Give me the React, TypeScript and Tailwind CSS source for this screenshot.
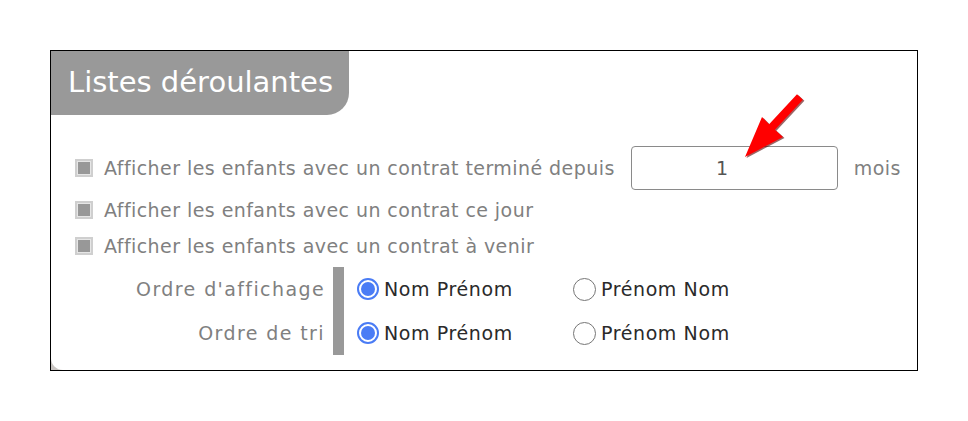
import React from "react";

const font = { fontFamily: '"DejaVu Sans", "Lato", sans-serif' };

function Check() {
  return (
    <span className="w-[18px] h-[18px] bg-[#cfcfcf] p-[2px] flex shrink-0">
      <span className="flex-1 bg-[#e6e6e6] p-[1px] flex">
        <span className="flex-1 bg-[#989898]" />
      </span>
    </span>
  );
}

function Radio({ on }: { on: boolean }) {
  return on ? (
    <span className="w-[22px] h-[22px] rounded-full border-2 border-[#4a7cf5] bg-white flex items-center justify-center shrink-0">
      <span className="w-[14px] h-[14px] rounded-full bg-[#4a7cf5]" />
    </span>
  ) : (
    <span className="w-[23px] h-[23px] rounded-full border-[1.5px] border-[#767676] bg-white shrink-0" />
  );
}

function RadioRow() {
  return (
    <div className="h-[44px] flex items-center">
      <div className="w-[216px] flex items-center gap-[5px]">
        <Radio on />
        <span className="text-[#2a2a2a] text-[19px] tracking-[0.6px]">Nom Prénom</span>
      </div>
      <div className="flex items-center gap-[5px]">
        <Radio on={false} />
        <span className="text-[#2a2a2a] text-[19px] tracking-[0.6px]">Prénom Nom</span>
      </div>
    </div>
  );
}

export default function App() {
  return (
    <div className="relative w-[968px] h-[421px] bg-white" style={font}>
      <div className="pt-[50px] pl-[50px]">
        <div className="w-[868px] h-[321px] border border-black bg-[#c9c5c2]">
          <div className="w-full h-full bg-white rounded-bl-[12px] flex flex-col">
            <div className="w-[298px] h-[64px] bg-[#999999] rounded-br-[22px] flex items-center pl-[17px]">
              <span className="text-white text-[29px]">Listes déroulantes</span>
            </div>
            <div className="pl-[24px] mt-[31px] flex flex-col text-[#808080] text-[19px] tracking-[0.44px]">
              <div className="h-[44px] flex items-center">
                <Check />
                <span className="ml-[11px]">
                  Afficher les enfants avec un contrat terminé depuis
                </span>
                <div className="ml-[16px] w-[207px] h-[44px] border border-[#8a8a8a] rounded-[4px] flex items-center justify-center pr-[24px] text-[19px] text-[#555]">
                  1
                </div>
                <span className="ml-[16px]">mois</span>
              </div>
              <div className="mt-[2px] h-[36px] flex items-center">
                <Check />
                <span className="ml-[11px]">
                  Afficher les enfants avec un contrat ce jour
                </span>
              </div>
              <div className="h-[36px] flex items-center">
                <Check />
                <span className="ml-[11px]">
                  Afficher les enfants avec un contrat à venir
                </span>
              </div>
            </div>
            <div className="mt-[3px] flex">
              <div className="w-[274px] flex flex-col text-right text-[#808080] text-[19px] tracking-[1.4px]">
                <div className="h-[44px] flex items-center justify-end">Ordre d'affichage</div>
                <div className="h-[44px] flex items-center justify-end">Ordre de tri</div>
              </div>
              <div className="ml-[8px] w-[11px] bg-[#999999]" />
              <div className="ml-[13px] flex flex-col">
                <RadioRow />
                <RadioRow />
              </div>
            </div>
          </div>
        </div>
      </div>
      <svg className="absolute left-0 top-0 pointer-events-none" width="968" height="421" viewBox="0 0 968 421">
        <polygon
          points="798.5,95.3 804.4,100.7 776.4,130.7 784.5,138 746.5,158 763.5,118 770.6,125.3"
          fill="#5a0000"
          opacity="0.6"
        />
        <polygon
          points="797,94.3 802.9,99.7 774.9,129.7 783,137 745,157 762,117 769.1,124.3"
          fill="#ff0000"
        />
      </svg>
    </div>
  );
}
